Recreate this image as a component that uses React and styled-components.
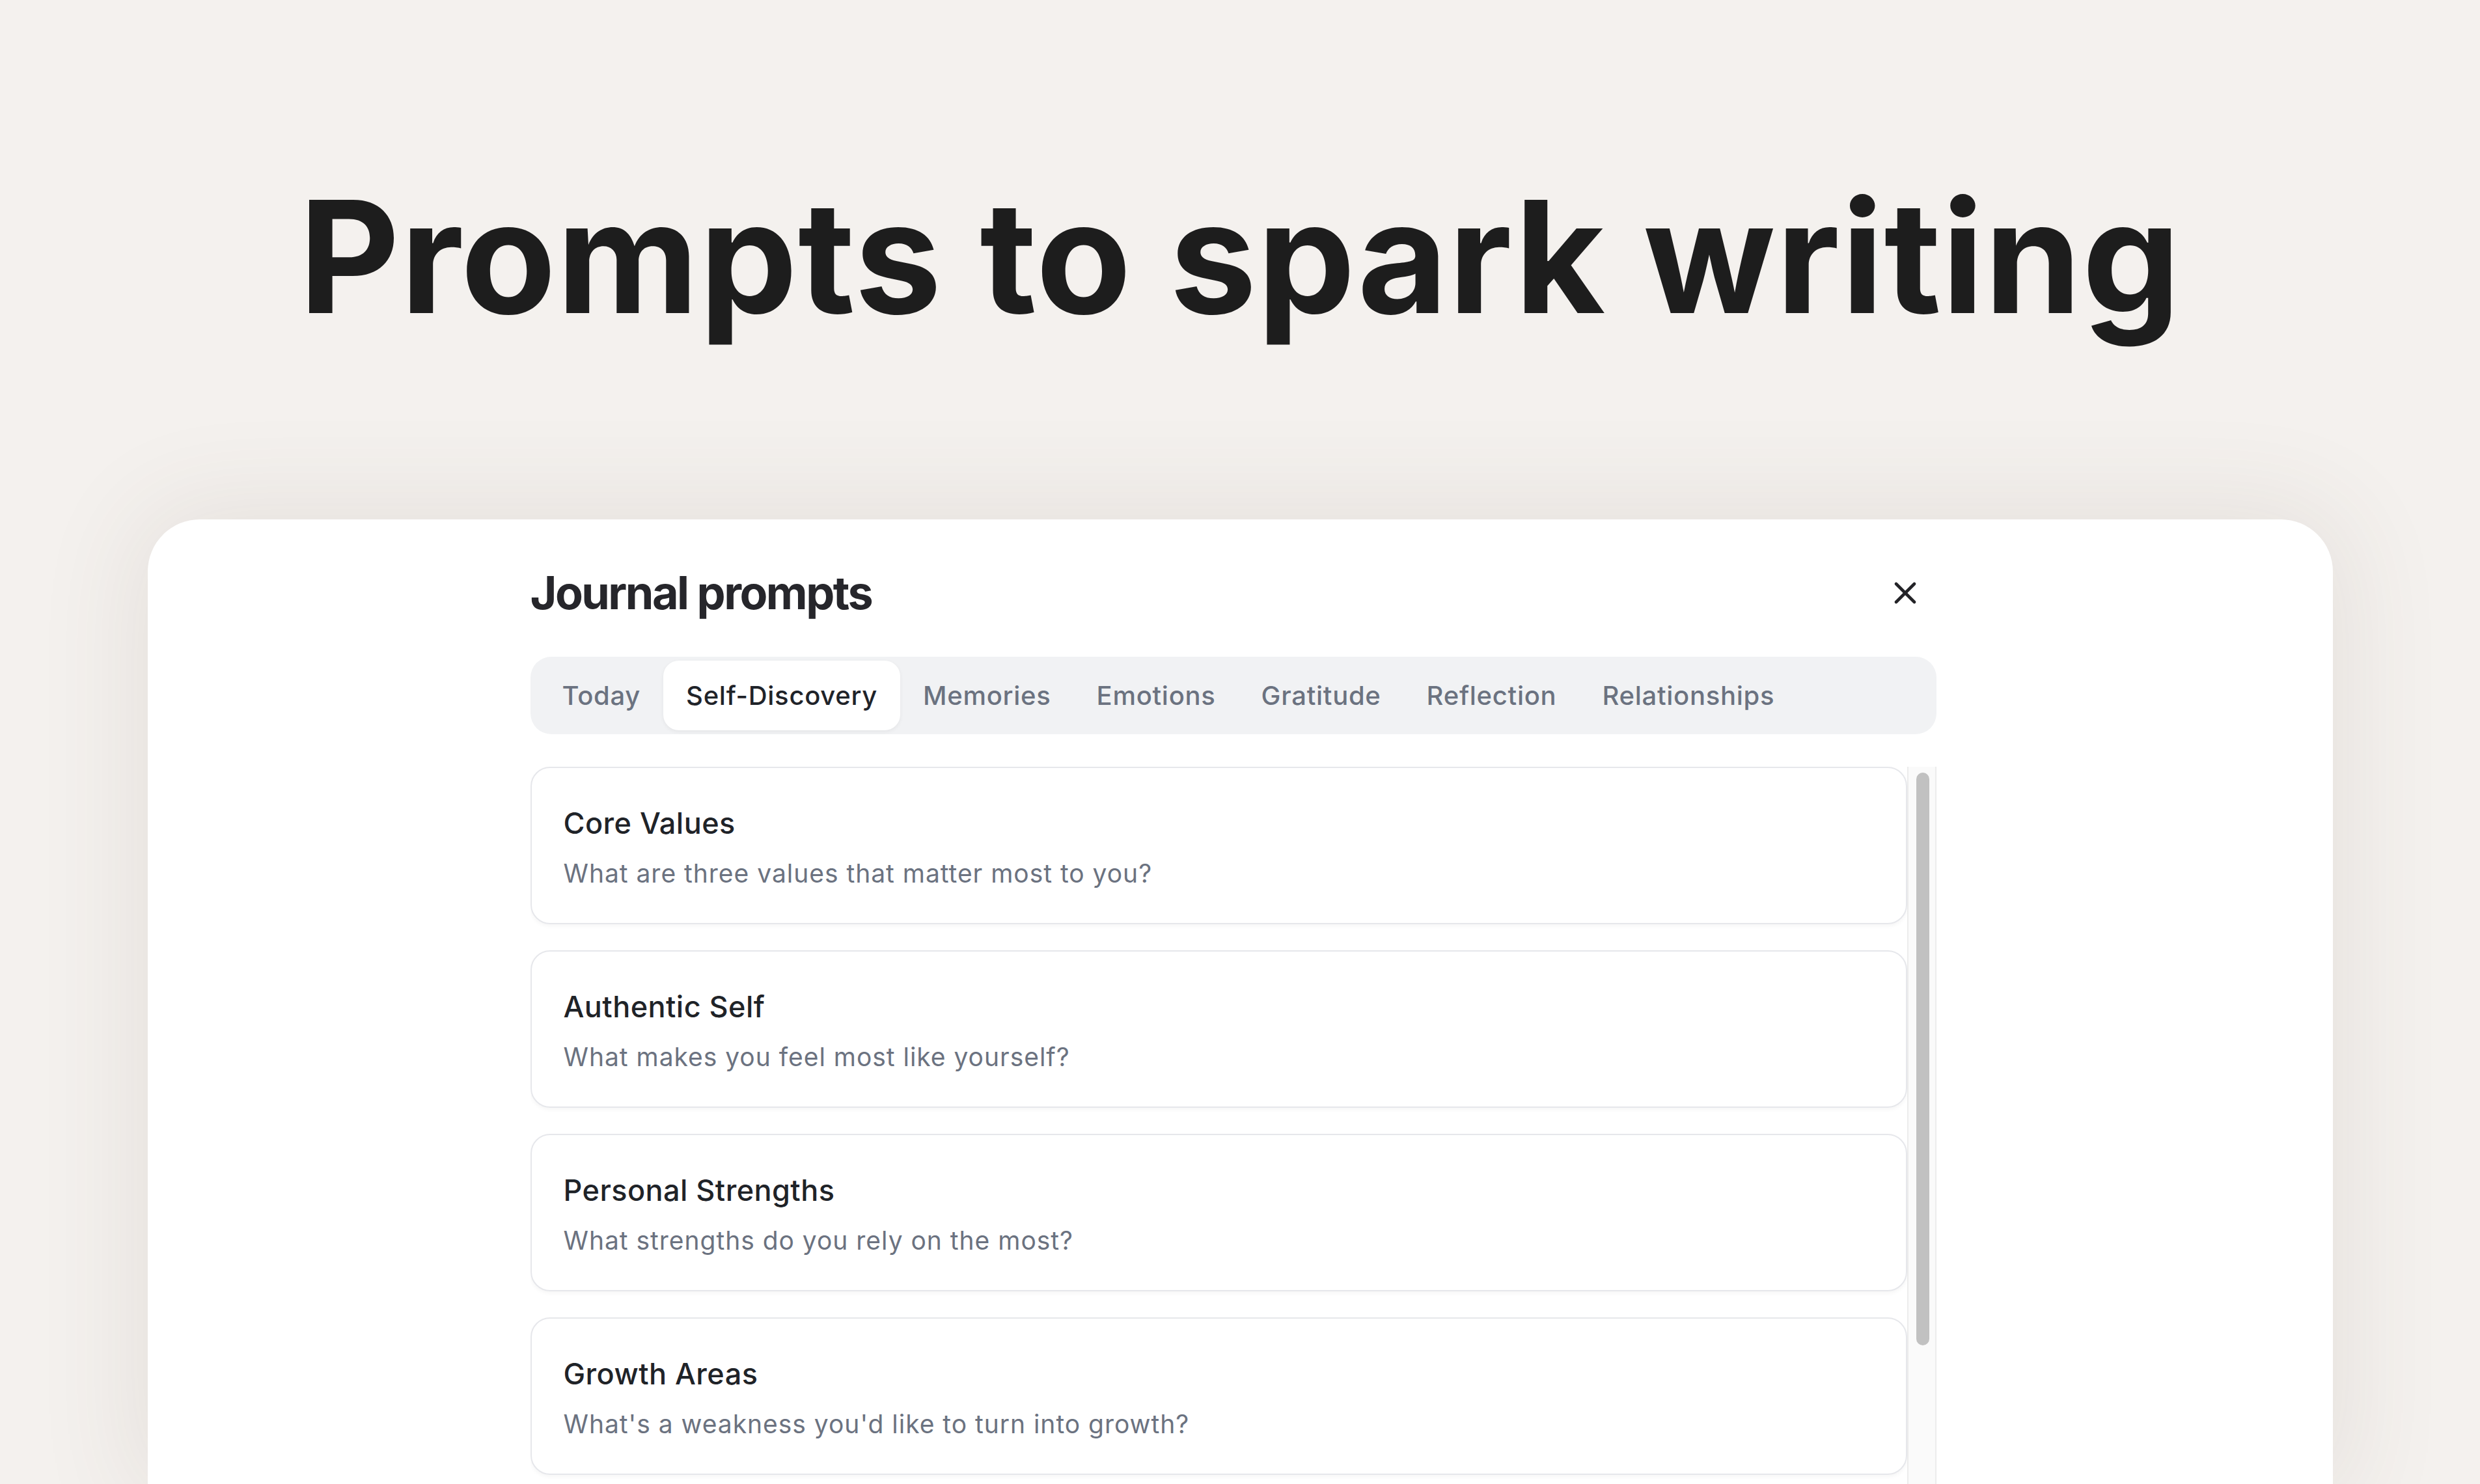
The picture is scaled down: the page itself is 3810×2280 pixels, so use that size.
import React from 'react';
import styled, { createGlobalStyle } from 'styled-components';
import { X } from 'lucide-react';

const GlobalStyle = createGlobalStyle`
  html, body {
    margin: 0;
    padding: 0;
    background: #f4f1ee;
  }
  * { box-sizing: border-box; }
`;

const tabs = ['Today', 'Self-Discovery', 'Memories', 'Emotions', 'Gratitude', 'Reflection', 'Relationships'];

const prompts = [
  { title: 'Core Values', text: 'What are three values that matter most to you?' },
  { title: 'Authentic Self', text: 'What makes you feel most like yourself?' },
  { title: 'Personal Strengths', text: 'What strengths do you rely on the most?' },
  { title: 'Growth Areas', text: "What's a weakness you'd like to turn into growth?" },
];

const Page = styled.div`
  height: 100vh;
  overflow: hidden;
  display: flex;
  flex-direction: column;
  align-items: center;
  background: #f4f1ee;
  font-family: Inter, "Noto Sans", sans-serif;
`;

const Headline = styled.h1`
  margin: 275px 0 0;
  font-size: 239px;
  line-height: 1;
  font-weight: 700;
  letter-spacing: 1px;
  color: #1d1d1d;
`;

const Panel = styled.section`
  flex: 1;
  width: 3357px;
  margin-top: 284px;
  padding: 75px 609px 0 588px;
  background: #fff;
  border-radius: 80px 80px 0 0;
  box-shadow: 0 0 160px 20px rgba(90, 70, 50, 0.09);
  display: flex;
  flex-direction: column;
  min-height: 0;
`;

const Header = styled.header`
  display: flex;
  align-items: center;
  justify-content: space-between;
  padding-right: 10px;
`;

const Title = styled.h2`
  margin: 0;
  font-size: 70px;
  line-height: 1;
  font-weight: 700;
  letter-spacing: -0.036em;
  color: #26262b;
`;

const CloseButton = styled.button`
  width: 76px;
  height: 76px;
  padding: 0;
  border: 0;
  background: transparent;
  color: #232327;
  display: flex;
  align-items: center;
  justify-content: center;
`;

const TabBar = styled.nav`
  margin-top: 60px;
  height: 119px;
  padding: 6px 14px;
  display: flex;
  background: #f1f2f4;
  border-radius: 32px;
`;

const Tab = styled.button`
  height: 107px;
  padding: 0 35px;
  border: 0;
  border-radius: 24px;
  font-family: inherit;
  font-size: 40px;
  font-weight: 500;
  letter-spacing: 0.018em;
  color: ${p => (p.$active ? '#1f2329' : '#6b7280')};
  background: ${p => (p.$active ? '#fff' : 'transparent')};
  box-shadow: ${p => (p.$active ? '0 2px 6px rgba(0, 0, 0, 0.06)' : 'none')};
`;

const ListArea = styled.div`
  flex: 1;
  min-height: 0;
  margin-top: 50px;
  display: flex;
`;

const List = styled.div`
  flex: 1;
  display: flex;
  flex-direction: column;
  gap: 40px;
  overflow: hidden;
`;

const Card = styled.article`
  flex-shrink: 0;
  height: 242px;
  padding: 53px 49px 47px;
  border: 2px solid #e6e7eb;
  border-radius: 30px;
  box-shadow: 0 3px 6px rgba(0, 0, 0, 0.04);
`;

const CardTitle = styled.h3`
  margin: 0;
  font-size: 45px;
  line-height: 63px;
  font-weight: 500;
  letter-spacing: 0.01em;
  color: #1f2328;
`;

const CardText = styled.p`
  margin: 17px 0 0;
  font-size: 39px;
  line-height: 58px;
  font-weight: 400;
  letter-spacing: 0.025em;
  color: #6b7280;
`;

const Track = styled.div`
  width: 45px;
  flex-shrink: 0;
  padding: 9px 9px 0 12px;
  background: #fafafa;
  border-left: 2px solid #ececec;
  border-right: 2px solid #ececec;
`;

const Thumb = styled.div`
  height: 880px;
  background: #c1c1c1;
  border-radius: 12px;
`;

export default function App() {
  return (
    <>
      <GlobalStyle />
      <Page>
        <Headline>Prompts to spark writing</Headline>
        <Panel>
          <Header>
            <Title>Journal prompts</Title>
            <CloseButton aria-label="Close">
              <X size={56} strokeWidth={2} />
            </CloseButton>
          </Header>
          <TabBar>
            {tabs.map(t => (
              <Tab key={t} $active={t === 'Self-Discovery'}>{t}</Tab>
            ))}
          </TabBar>
          <ListArea>
            <List>
              {prompts.map(p => (
                <Card key={p.title}>
                  <CardTitle>{p.title}</CardTitle>
                  <CardText>{p.text}</CardText>
                </Card>
              ))}
            </List>
            <Track>
              <Thumb />
            </Track>
          </ListArea>
        </Panel>
      </Page>
    </>
  );
}
